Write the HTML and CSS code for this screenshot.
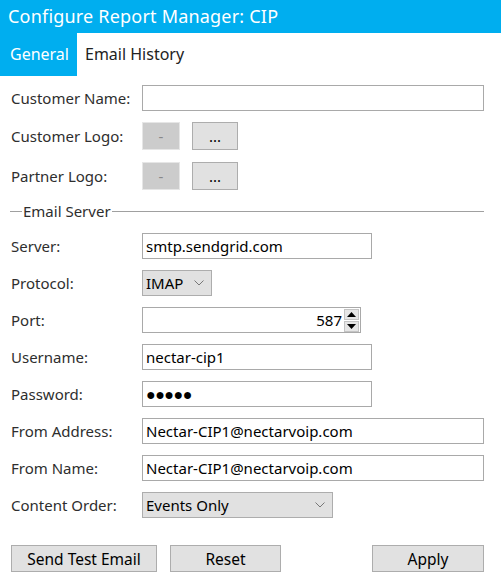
FILE: index.html
```html
<!DOCTYPE html>
<html lang="en">
<head>
    <meta charset="UTF-8">
    <meta name="viewport" content="width=device-width, initial-scale=1.0">
    <title>Configure Report Manager</title>
    <link rel="stylesheet" href="styles.css">
</head>
<body>
<!-- Window title -->
<div class="title-bar">Configure Report Manager: CIP</div>

<!-- Tabs -->
<div class="tabs">
  <div class="tab active">General</div>
  <div class="tab">Email History</div>
</div>

<!-- General settings -->
<div class="settings-form">
  <div class="row">
    <label for="customerName">Customer Name:</label>
    <input type="text" id="customerName" class="field wide">
  </div>

  <div class="row logo-row">
    <label>Customer Logo:</label>
    <button class="logo-btn" disabled>-</button>
    <button class="browse-btn">...</button>
  </div>

  <div class="row logo-row">
    <label>Partner Logo:</label>
    <button class="logo-btn" disabled>-</button>
    <button class="browse-btn">...</button>
  </div>

  <!-- Email Server group -->
  <div class="group-title">
    <span class="group-line short"></span>
    <span class="group-text">Email Server</span>
    <span class="group-line"></span>
  </div>

  <div class="row">
    <label for="server">Server:</label>
    <input type="text" id="server" class="field medium" value="smtp.sendgrid.com">
  </div>

  <div class="row">
    <label>Protocol:</label>
    <div class="dropdown protocol">
      <span>IMAP</span>
      <svg class="chevron" width="10" height="6" viewBox="0 0 10 6"><path d="M0.5 0.5 L5 5 L9.5 0.5" fill="none" stroke="#777" stroke-width="1"/></svg>
    </div>
  </div>

  <div class="row">
    <label for="port">Port:</label>
    <div class="field port">
      <span class="port-value">587</span>
      <div class="spinner">
        <div class="spin-btn"><svg width="9" height="5" viewBox="0 0 9 5"><path d="M0 5 L4.5 0 L9 5 Z" fill="#000"/></svg></div>
        <div class="spin-btn"><svg width="9" height="5" viewBox="0 0 9 5"><path d="M0 0 L4.5 5 L9 0 Z" fill="#000"/></svg></div>
      </div>
    </div>
  </div>

  <div class="row">
    <label for="username">Username:</label>
    <input type="text" id="username" class="field medium" value="nectar-cip1">
  </div>

  <div class="row">
    <label>Password:</label>
    <div class="field medium password">●●●●●</div>
  </div>

  <div class="row">
    <label for="fromAddress">From Address:</label>
    <input type="text" id="fromAddress" class="field wide" value="Nectar-CIP1@nectarvoip.com">
  </div>

  <div class="row">
    <label for="fromName">From Name:</label>
    <input type="text" id="fromName" class="field wide" value="Nectar-CIP1@nectarvoip.com">
  </div>

  <div class="row">
    <label>Content Order:</label>
    <div class="dropdown content-order">
      <span>Events Only</span>
      <svg class="chevron" width="10" height="6" viewBox="0 0 10 6"><path d="M0.5 0.5 L5 5 L9.5 0.5" fill="none" stroke="#777" stroke-width="1"/></svg>
    </div>
  </div>

  <!-- Footer buttons -->
  <div class="actions">
    <button class="action-btn send-btn">Send Test Email</button>
    <button class="action-btn reset-btn">Reset</button>
    <button class="action-btn apply-btn">Apply</button>
  </div>
</div>
</body>
</html>
```

FILE: styles.css
```css
body {
  margin: 0;
  font-family: "Noto Sans", "Open Sans", sans-serif;
  color: #2e2e2e;
  background: #fff;
}

/* Title bar */
.title-bar {
  height: 33px;
  line-height: 33px;
  padding-left: 8px;
  background-color: #00aeef;
  color: #fff;
  font-size: 18px;
  letter-spacing: 0.2px;
}

/* Tabs */
.tabs {
  display: flex;
  height: 43px;
}

.tab {
  padding: 0 8px;
  line-height: 43px;
  font-size: 16px;
  color: #222;
}

.tab.active {
  width: 77px;
  box-sizing: border-box;
  padding-left: 10px;
  background-color: #00aeef;
  color: #fff;
}

/* Form */
.settings-form {
  display: flex;
  flex-direction: column;
  gap: 11px;
  padding: 9px 17px 0 11px;
}

.row {
  display: flex;
  align-items: center;
  height: 26px;
}

.row label {
  width: 131px;
  flex-shrink: 0;
  font-size: 15px;
}

.logo-row {
  height: 28px;
}

.logo-row + .logo-row {
  margin-top: 1px;
}

.field {
  box-sizing: border-box;
  height: 26px;
  border: 1px solid #a9a9a9;
  padding: 0 3px;
  font-family: "Noto Sans", "Open Sans", sans-serif;
  font-size: 15px;
  color: #000;
  background: #fff;
  outline: none;
}

.wide {
  width: 342px;
}

.medium {
  width: 230px;
}

.logo-btn,
.browse-btn {
  box-sizing: border-box;
  height: 28px;
  font-family: inherit;
  font-size: 15px;
  padding: 0;
}

.logo-btn {
  width: 38px;
  background: #cccccc;
  border: 1px solid #e6e6e6;
  color: #888;
}

.browse-btn {
  width: 46px;
  margin-left: 12px;
  background: #e1e1e1;
  border: 1px solid #adadad;
  color: #000;
}

/* Group header with line */
.group-title {
  display: flex;
  align-items: center;
  height: 20px;
  margin-bottom: 1px;
}

.group-line {
  flex: 1;
  border-top: 1px solid #a0a0a0;
}

.group-line.short {
  flex: 0 0 12px;
  margin-left: -1px;
}

.group-text {
  font-size: 15px;
  padding: 0 1px;
}

/* Dropdowns */
.dropdown {
  box-sizing: border-box;
  display: flex;
  align-items: center;
  justify-content: space-between;
  height: 26px;
  padding: 0 7px 0 3px;
  background: #e1e1e1;
  border: 1px solid #adadad;
  font-size: 15px;
  color: #000;
}

.protocol {
  width: 70px;
}

.content-order {
  width: 191px;
}

/* Port spinner */
.port {
  display: flex;
  align-items: center;
  justify-content: flex-end;
  width: 219px;
  padding: 0 1px 0 3px;
}

.port-value {
  margin-right: 2px;
}

.spinner {
  display: flex;
  flex-direction: column;
  gap: 1px;
}

.spin-btn {
  box-sizing: border-box;
  display: flex;
  align-items: center;
  justify-content: center;
  width: 15px;
  height: 11px;
  background: #e6e6e6;
  border: 1px solid #c4c4c4;
}

.password {
  display: flex;
  align-items: center;
  font-size: 16px;
  letter-spacing: -0.5px;
}

/* Footer buttons */
.actions {
  display: flex;
  margin-top: 16px;
}

.action-btn {
  box-sizing: border-box;
  height: 27px;
  background: #e1e1e1;
  border: 1px solid #adadad;
  font-family: inherit;
  font-size: 15.5px;
  color: #000;
  padding: 0;
}

.send-btn {
  width: 146px;
}

.reset-btn {
  width: 111px;
  margin-left: 13px;
}

.apply-btn {
  width: 112px;
  margin-left: auto;
}
```
